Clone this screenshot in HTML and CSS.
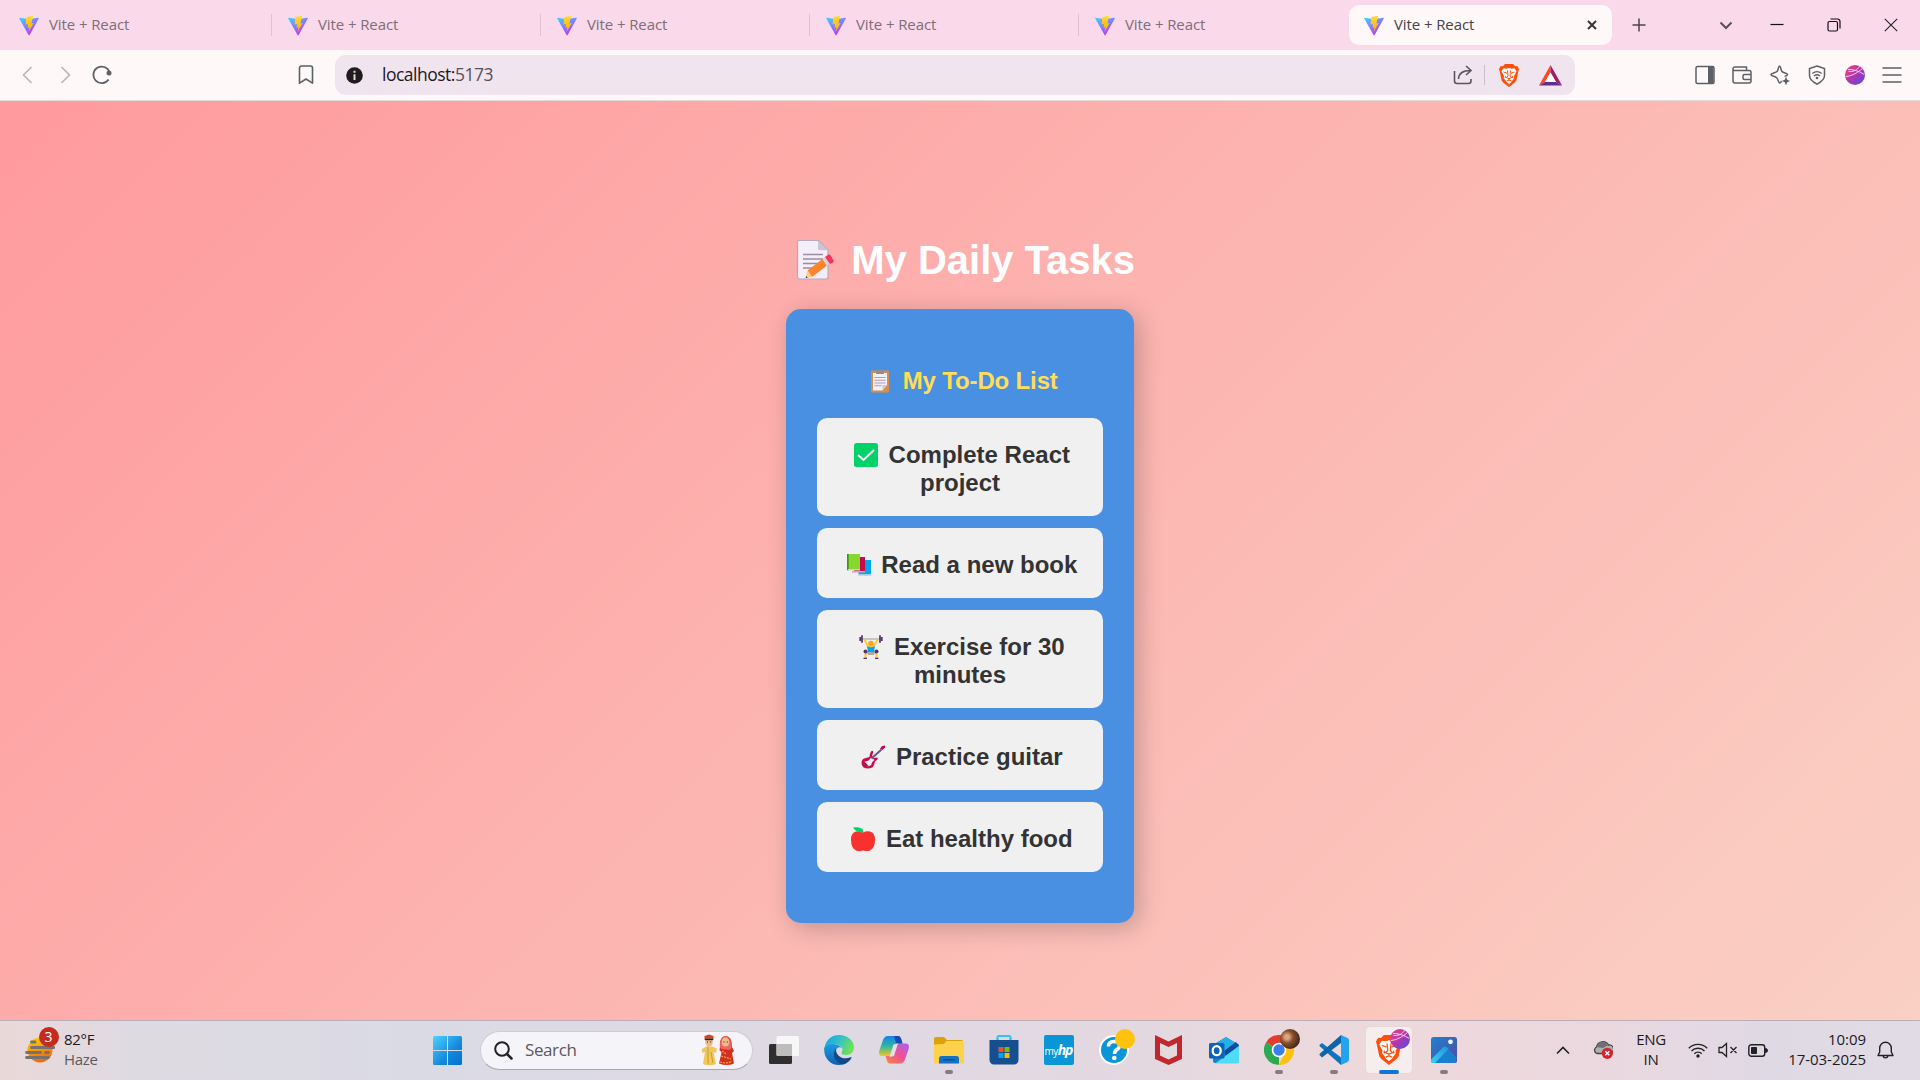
FILE: index.html
```html
<!DOCTYPE html>
<html lang="en">
<head>
<meta charset="utf-8">
<title>Vite + React</title>
<link rel="stylesheet" href="styles.css">
</head>
<body>
<svg class="defs" width="0" height="0">
  <defs>
    <linearGradient id="vg" x1="0" y1="0" x2=".6" y2="1"><stop offset="0" stop-color="#41d1ff"/><stop offset="1" stop-color="#bd34fe"/></linearGradient>
    <linearGradient id="vy" x1="0" y1="0" x2="0" y2="1"><stop offset="0" stop-color="#ffdd35"/><stop offset="1" stop-color="#ffa800"/></linearGradient>
    <linearGradient id="av" x1="0" y1="0" x2="1" y2="1"><stop offset="0" stop-color="#f0447c"/><stop offset=".5" stop-color="#b136b0"/><stop offset="1" stop-color="#4a50e0"/></linearGradient>
    <linearGradient id="win" x1="0" y1="0" x2="1" y2="1"><stop offset="0" stop-color="#4fd2ff"/><stop offset=".6" stop-color="#1488dd"/><stop offset="1" stop-color="#0072cf"/></linearGradient>
    <linearGradient id="sun" x1="0" y1="0" x2=".3" y2="1"><stop offset="0" stop-color="#ffd400"/><stop offset="1" stop-color="#f06a10"/></linearGradient>
    <symbol id="vite" viewBox="0 0 32 32">
      <path fill="url(#vg)" d="M31.500 5 17 31.300a1 1 0 0 1-1.700 0L.5 5A1 1 0 0 1 1.500 3.600l14.300 2.500 14.500-2.500A1 1 0 0 1 31.500 5z"/>
      <path fill="url(#vy)" d="M22.500 .3 12 2.300a.5.5 0 0 0-.4.400L10.500 14.500l4-.8-.9 6 3-.8-1.300 7.600 8.200-14.500-3.700.8z"/>
    </symbol>
    <symbol id="brave" viewBox="0 0 20 23">
      <path fill="#fb4f0c" d="M6 0h8l2.200 2.300 2-.2L20 5l-.6 2L17.500 16c-.7 2.300-4.500 4.700-7.500 7-3-2.300-6.800-4.700-7.500-7L.600 7 0 5l1.800-2.900 2 .2z"/>
      <path fill="#fff" d="m4.500 4.300 3 .5 2.500-.8 2.500.8 3-.5 2 3-2.500 4.700.3 2-2 2.500-.8 1.500L10 20l-2.500-2-.8-1.500-2-2.500.3-2L2.500 7.300z"/>
      <path fill="none" stroke="#fb4f0c" stroke-width="1" d="m4.500 8 3.500 1.200M15.500 8 12 9.200M8.500 6.500 9 12l-1.800 1.500 2.800 1.200 2.800-1.200L11 12l.5-5.500M10 14.700v1.800M6.500 12l-.3 2M13.500 12l.3 2M7.500 17l2.500-1 2.500 1"/>
    </symbol>
    <symbol id="ball" viewBox="0 0 20 20">
      <circle cx="10" cy="10" r="10" fill="url(#av)"/>
      <path d="M.8 11.500C7 11 13 7.500 17.500 3.400M3 4.500c5-.2 11 1.500 16.300 5M3.500 6.500c4 .5 9-1 11-5.300" fill="none" stroke="#ffd9ee" stroke-width=".9"/>
    </symbol>
  </defs>
</svg>

<header class="tabs">
  <div class="tab"><svg class="fav"><use href="#vite"/></svg><span>Vite + React</span></div>
  <div class="tab"><svg class="fav"><use href="#vite"/></svg><span>Vite + React</span></div>
  <div class="tab"><svg class="fav"><use href="#vite"/></svg><span>Vite + React</span></div>
  <div class="tab"><svg class="fav"><use href="#vite"/></svg><span>Vite + React</span></div>
  <div class="tab last"><svg class="fav"><use href="#vite"/></svg><span>Vite + React</span></div>
  <div class="tab active"><svg class="fav"><use href="#vite"/></svg><span>Vite + React</span>
    <svg class="close" width="10" height="10" viewBox="0 0 10 10"><path d="m1 1 8 8M9 1 1 9" stroke="#333" stroke-width="1.900"/></svg></div>
  <svg class="plus" width="14" height="14" viewBox="0 0 14 14"><path d="M7 .5v13M.5 7h13" stroke="#4d444b" stroke-width="1.500"/></svg>
  <div class="window">
    <svg width="14" height="14" viewBox="0 0 14 14"><path d="m1.500 4.500 5.500 5.500 5.500-5.500" fill="none" stroke="#5a5158" stroke-width="2"/></svg>
    <svg width="14" height="14" viewBox="0 0 14 14"><path d="M.5 6.500h13" stroke="#111" stroke-width="1.200"/></svg>
    <svg width="14" height="14" viewBox="0 0 14 14"><rect x="1" y="3.500" width="9.500" height="9.500" rx="1.500" fill="none" stroke="#111" stroke-width="1.200"/><path d="M3.500 1h7a2.500 2.500 0 0 1 2.500 2.500v7" fill="none" stroke="#111" stroke-width="1.200"/></svg>
    <svg width="14" height="14" viewBox="0 0 14 14"><path d="m.8.8 12.400 12.400M13.200.8.8 13.200" stroke="#222" stroke-width="1.100"/></svg>
  </div>
</header>

<nav class="toolbar">
  <div class="nav">
    <svg width="11" height="18" viewBox="0 0 11 18"><path d="M9.500 1 1.500 9l8 8" fill="none" stroke="#b9b5b8" stroke-width="1.600"/></svg>
    <svg width="11" height="18" viewBox="0 0 11 18"><path d="m1.500 1 8 8-8 8" fill="none" stroke="#b9b5b8" stroke-width="1.600"/></svg>
    <svg width="20" height="20" viewBox="0 0 20 20"><path d="M16.600 14.500A8.300 8.300 0 1 1 17.500 7" fill="none" stroke="#5d6065" stroke-width="1.800"/><circle cx="17" cy="8" r="2.500" fill="#5d6065"/></svg>
  </div>
  <svg class="mark" width="16" height="20" viewBox="0 0 16 20"><path d="M1.500 3a2 2 0 0 1 2-2h9a2 2 0 0 1 2 2v15.200L8 14l-6.500 4.200z" fill="none" stroke="#5d6065" stroke-width="1.600" stroke-linejoin="round"/></svg>
  <div class="url">
    <svg width="17" height="17" viewBox="0 0 17 17"><circle cx="8.500" cy="8.500" r="8.300" fill="#211a1f"/><path d="M8.500 3.800v2M8.500 7.200v5.800" stroke="#ddd" stroke-width="2"/></svg>
    <span class="addr">localhost:<i>5173</i></span>
    <svg class="share" width="20" height="20" viewBox="0 0 20 20"><path d="M1.500 6v10a2.500 2.500 0 0 0 2.500 2.500h11.500a2.500 2.500 0 0 0 2.500-2.500v-2M5.500 14c.3-6 5-8.500 12-8.500M13 1l5 4.500-5 4.500" fill="none" stroke="#5b5560" stroke-width="1.600"/></svg>
    <span class="rule"></span>
    <svg class="lion" width="20" height="23"><use href="#brave"/></svg>
    <svg width="23" height="21" viewBox="0 0 23 21"><path d="M11.500 0 0 20.500l6-3.500 5.500-9.500z" fill="#ff4724"/><path d="M11.500 0 23 20.500 17 17l-5.500-9.500z" fill="#9e1f63"/><path d="M0 20.500h23L17 17H6z" fill="#662d91"/><path d="M11.500 7.500 17 17H6z" fill="#fff"/></svg>
  </div>
  <div class="ext">
    <svg viewBox="0 0 20 20"><rect x="1" y="1.500" width="18" height="17" rx="1.500" fill="none" stroke="#5d6065" stroke-width="1.500"/><path d="M13 1h5.500v18H13z" fill="#5d6065"/></svg>
    <svg viewBox="0 0 20 20"><path d="M1 4a2 2 0 0 1 2-2h11.500v3.500M1 4v12a2 2 0 0 0 2 2h14a2 2 0 0 0 2-2V7.500a2 2 0 0 0-2-2H2.500A1.500 1.500 0 0 1 1 4M19 9.500h-6.500a1.500 1.500 0 0 0-1.500 1.500v2a1.500 1.500 0 0 0 1.500 1.500H19" fill="none" stroke="#5d6065" stroke-width="1.500"/></svg>
    <svg viewBox="0 0 20 20"><path d="M12 16.500c-1-.3-1.500 1.500-2.500 1.500S8 13.500 6.500 12.500 1 11 1 9.500 5.500 8 7 6.500 8.300 1 9.500 1s1.300 4 2.500 5.500 5.500 1.700 5.500 3-2 1.200-3 2" fill="none" stroke="#5d6065" stroke-width="1.500"/><path d="m16 11.500 1.200 3.300 3 1.200-3 1.200L16 20.500l-1.200-3.300-3-1.200 3-1.200z" fill="#5d6065"/></svg>
    <svg viewBox="0 0 20 20"><path d="m10 1 7.500 2.500v7c0 4-3.500 6.500-7.500 8.700-4-2.200-7.500-4.700-7.500-8.700v-7z" fill="none" stroke="#5d6065" stroke-width="1.500"/><path d="M5.300 8.500c3-2.400 6.400-2.400 9.400 0M7 11c2-1.600 4-1.600 6 0" fill="none" stroke="#5d6065" stroke-width="1.400"/><circle cx="10" cy="13" r="1.300" fill="#5d6065"/></svg>
    <svg><use href="#ball"/></svg>
    <svg viewBox="0 0 20 20"><path d="M.5 3h19M.5 10h19M.5 17h19" stroke="#5d6065" stroke-width="1.500"/></svg>
  </div>
</nav>

<main class="page">
  <h1><span class="emoji"><svg width="42" height="42" viewBox="0 0 42 42"><path d="M6.500 1.500h19l9.500 9.500v27a2 2 0 0 1-2 2H6.500a2 2 0 0 1-2-2V3.500a2 2 0 0 1 2-2z" fill="#f3eef8" stroke="#b7a9bd" stroke-width="1.200"/><path d="M25 1.500v8a1.700 1.700 0 0 0 1.700 1.700H35z" fill="#cdc4d6"/><path d="M10 15.500h20M10 20h20M10 24.500h18M10 29h11" stroke="#998ea4" stroke-width="1.400"/><path d="m14.500 31.500 15-11.500 4.500 6.500-15 11.500z" fill="#ff822d"/><path d="m14.500 31.500 4.500 6.500-6.300 1z" fill="#ffce7c"/><path d="m12.700 39 .5-2 1.500 1.700z" fill="#402a32"/><path d="m29.500 20 2.500-2 5 6.500-3 2z" fill="#d3d3d3"/><path d="m32 18 3-2.200q1.300-.8 2.300.5l3.200 4.600q.7 1.300-.5 2.300l-3 1.900z" fill="#f8315f"/></svg></span> My Daily Tasks</h1>
  <section class="card">
    <h2><span class="emoji"><svg width="24" height="24" viewBox="0 0 24 24"><rect x="3" y="1.500" width="18" height="22" rx="1" fill="#d58f48"/><path d="M5 4h14v12l-4.500 5.500H5z" fill="#f3eef8"/><path d="M19 16h-4.500v5.500z" fill="#cdc4d6"/><path d="M8 2h2a2 2 0 0 1 4 0h2v3H8z" fill="#998c88"/><path d="M6.500 8.500h11M6.500 11.300h11M6.500 14h11M6.500 16.700h7" stroke="#a9a2b0" stroke-width="1"/></svg></span> My To-Do List</h2>
    <ul>
      <li><span class="emoji"><svg width="24" height="24" viewBox="0 0 24 24"><rect width="24" height="24" rx="2.500" fill="#00d26a"/><path d="m4 12 5.500 5L20 7" fill="none" stroke="#fff" stroke-width="2"/></svg></span> Complete React project</li>
      <li><span class="emoji"><svg width="24" height="24" viewBox="0 0 24 24"><path d="M11.500 7H24v14.500H11.500z" fill="#00a6ed"/><path d="M11.500 21.500H24V23H11.500z" fill="#b9d8ea"/><path d="M7 4h11v14H7z" fill="#ca0b4a"/><path d="M5 18h13v1.500H5z" fill="#d9a0b5"/><path d="M0 1h13v15H0z" fill="#86d72f"/><path d="M0 1h1.700v17L0 17z" fill="#44911b"/><path d="M1 16h12v1.500H1z" fill="#d3d3d3"/></svg></span> Read a new book</li>
      <li><span class="emoji"><svg width="24" height="24" viewBox="0 0 24 24"><path d="M2 4h20" stroke="#9b9b9b" stroke-width="1"/><path d="M1.200 2v4M3 .3v7.400M21 .3v7.400M22.800 2v4" stroke="#533566" stroke-width="1.700"/><path d="m5.500 4.500 3 6 3.500 1 3.500-1 3-6M8 17.500l-1.500 2V23M16 17.500l1.500 2V23" fill="none" stroke="#ffc83d" stroke-width="2"/><circle cx="12" cy="8.500" r="2.800" fill="#f5a819"/><path d="M8 11q4 2.500 8 0l-1 6H9z" fill="#00a6ed"/><path d="M8 17h8l-1 3H9z" fill="#aaa"/><circle cx="6.500" cy="16.500" r="2" fill="#533566"/><circle cx="17.500" cy="16.500" r="2" fill="#533566"/><path d="M4.500 23.400H8M16 23.400h3.500" stroke="#533566" stroke-width="1.300"/></svg></span> Exercise for 30 minutes</li>
      <li><span class="emoji"><svg width="24" height="24" viewBox="0 0 24 24"><path d="M8.500 12Q8.500 9 10 6.500q1.500-1.500 2.200 0 0 1.500-1 3.500-.2 2.500 2 3l3-.5q1.500 1-.7 2.800-2 1-2 3-.5 5-6 5.200Q.5 23.500.500 18q0-4.500 4.500-5z" fill="#ca0b4a"/><path d="M3.500 16.500q4.500 0 6.500-4l3.500 2.500q-3 2-3.200 5l-3.300 1.500z" fill="#f3eef8"/><path d="m10.500 13.500 10-9" stroke="#635994" stroke-width="2"/><path d="m19 3.800 2-2.800L24 .5v2L21.500 5z" fill="#ca0b4a"/><path d="m4 18 3.500 3" stroke="#402a32" stroke-width="1"/></svg></span> Practice guitar</li>
      <li><span class="emoji"><svg width="24" height="24" viewBox="0 0 24 24"><path d="M12 5.500q3.500-2 7-1 5 1.500 5 8 0 9-5.500 11.300-3 .7-6.500-.3-3.500 1-6.500.3Q0 21.500 0 12.500q0-6.500 5-8 3.500-1 7 1z" fill="#f8312f"/><path d="M12.500 5.500Q6.500 5 4 3l-2-2.500Q10-.5 12 3z" fill="#00d26a"/></svg></span> Eat healthy food</li>
    </ul>
  </section>
</main>

<footer class="taskbar">
  <div class="weather">
    <div class="haze">
      <svg width="30" height="28" viewBox="0 0 30 28"><circle cx="15" cy="14" r="12.500" fill="url(#sun)"/><path d="M6.500 6H10M6.500 11.500H29M1.500 16.500h14M20.500 16.500h3M1.500 21.500h22" stroke="#77716d" stroke-width="2.800" stroke-linecap="round"/></svg>
      <b>3</b>
    </div>
    <p>82°F<br><em>Haze</em></p>
  </div>
  <div class="app start"><svg width="29" height="29" viewBox="0 0 29 29"><path d="M1.500 0H14v14H0V1.500A1.500 1.500 0 0 1 1.500 0zM15 0h12.500A1.500 1.500 0 0 1 29 1.500V14H15zM0 15h14v14H1.500A1.500 1.500 0 0 1 0 27.500zM15 15h14v12.500a1.500 1.500 0 0 1-1.500 1.500H15z" fill="url(#win)"/></svg></div>
  <div class="search">
    <svg width="19" height="19" viewBox="0 0 19 19"><circle cx="8" cy="8" r="6.800" fill="none" stroke="#222" stroke-width="2"/><path d="m13 13 4.500 4.500" stroke="#222" stroke-width="2.500" stroke-linecap="round"/></svg>
    <span>Search</span>
    <svg class="couple" width="34" height="32" viewBox="0 0 34 32"><path d="M5 12.500h6l5 2-1 4.500-2.500-1 2.500 12q-7 2.500-13 0L4 18l-2.500 1-1-3.500z" fill="#efc75a"/><path d="M7 12.500v17M10 18l2 11" stroke="#cf9c31" stroke-width="1"/><ellipse cx="8" cy="8" rx="3.800" ry="4.500" fill="#f2b98c"/><path d="M3.500 6V2L8 .5 12.500 2v4L11 4H5z" fill="#d8421c"/><path d="M4 5.300h8" stroke="#352018" stroke-width="1.800"/><path d="M19 13Q18 3 24.500 2q6.500 0 6.500 11l2 4-2 2 2 10.500q-7 3-15 0l2.500-11-2-2.500z" fill="#d32e22"/><path d="M19 13q-.5-10 5.500-11 6 1 6 12l-2 2-8-1z" fill="#ee665f"/><ellipse cx="24.500" cy="8" rx="3.700" ry="4.500" fill="#f2b98c"/><path d="M19 28q6 2 12-.5M20 22l10 3M21 17l4 3" stroke="#f0a23a" stroke-width="1.300" stroke-dasharray="2 1" fill="none"/><path d="M6 8h1M9.200 8h1M22.500 8h1M25.800 8h1" stroke="#222" stroke-width="1.200"/></svg>
  </div>
  <div class="app"><svg width="30" height="30" viewBox="0 0 30 30"><rect x="0" y="9" width="23" height="20" rx="1.500" fill="#2f2f2f"/><rect x="7.500" y="1" width="22.500" height="20" rx="1.500" fill="#fafafa" opacity=".9"/><path d="M7.500 9H23v12H9a1.500 1.500 0 0 1-1.500-1.500z" fill="#bdbdbd"/></svg></div>
  <div class="app"><svg width="30" height="30" viewBox="0 0 30 30"><defs><linearGradient id="e1" x1="0" y1="0" x2="1" y2=".4"><stop offset="0" stop-color="#1b9de2"/><stop offset=".5" stop-color="#2fc0cb"/><stop offset="1" stop-color="#6be15a"/></linearGradient><linearGradient id="e2" x1="0" y1="0" x2="0" y2="1"><stop offset="0" stop-color="#1b9de2"/><stop offset="1" stop-color="#0f5fb5"/></linearGradient></defs><path d="M.5 13C2 4 8 0 15 0c9 0 15 6 15 12.500 0 5-4 7.500-8 7.500-3 0-4.500-1-4.500-2s1-1.500 1-3.500C18.500 9 9 6.500.5 13z" fill="url(#e1)"/><path d="M.2 13C4 7.500 15 8 18 13c-3-2-6.500.5-6.500 4.500 0 5 5 10 13.500 8C22 29 18 30 15 30 6 30-.5 22.500.200 13z" fill="url(#e2)"/><path d="M12 13.500c-5 7 0 15 7 16 3-.8 6.500-3 8.500-6.500.3-.8-.3-1-1-.7-7 3-15-.8-14.500-8.800z" fill="#114a8b"/></svg></div>
  <div class="app"><svg width="30" height="28" viewBox="0 0 30 28"><defs><linearGradient id="c1" x1="0" y1="0" x2="0" y2="1"><stop offset="0" stop-color="#1b80e5"/><stop offset=".5" stop-color="#2bb6a5"/><stop offset="1" stop-color="#f2c81f"/></linearGradient><linearGradient id="c2" x1="1" y1="0" x2="0" y2="1"><stop offset="0" stop-color="#a763f3"/><stop offset=".5" stop-color="#ee5096"/><stop offset="1" stop-color="#ff8a3c"/></linearGradient></defs><path d="M9 0h10q2.500 0 3.500 4l1 3.500h-4q-3 0-4 3.500l-2 6q-1 3-4 3H3Q-1 20 .500 14L4 4q1.500-4 5-4z" fill="url(#c1)"/><path d="M21 27.500H11q-2.500 0-3.500-4l-1-3.500h4q3 0 4-3.500l2-6q1-3 4-3H27q4 0 2.500 6L26 23.500q-1.500 4-5 4z" fill="url(#c2)"/><path d="M15 0h4q2.500 0 3.500 4l1 3.500h-4q-3 0-3-2.500z" fill="#174ab5"/><path d="m14.500 8.500 4.500-1-4 12.500-4.500 1z" fill="#e4dce8"/></svg></div>
  <div class="app running"><svg width="30" height="28" viewBox="0 0 30 28"><path d="M0 2.500A1.500 1.500 0 0 1 1.500 1H10l3 3h15.500v6H0z" fill="#dfa109"/><path d="m0 8.500 10-.5 2.500-3H28.500A1.500 1.500 0 0 1 30 6.500v20a1 1 0 0 1-1 1H1a1 1 0 0 1-1-1z" fill="#fdd14a"/><path d="M5 27.500v-5A2.500 2.500 0 0 1 7.500 20h15a2.500 2.500 0 0 1 2.500 2.500v5z" fill="#1272c4"/><path d="M9 23.800h12" stroke="#0b4c93" stroke-width="1.400"/></svg></div>
  <div class="app"><svg width="30" height="30" viewBox="0 0 30 30"><path d="M8.500 7V2.500A1.500 1.500 0 0 1 10 1h10a1.500 1.500 0 0 1 1.500 1.500V7" fill="none" stroke="#36c2f3" stroke-width="2"/><path d="M.5 5h29v20a4.500 4.500 0 0 1-4.500 4.500H5A4.500 4.500 0 0 1 .5 25z" fill="#164f8f"/><path d="M8.500 5V3M21.500 5V3" stroke="#36c2f3" stroke-width="2"/><path d="M9.500 12h5v5h-5z" fill="#f25022"/><path d="M15.500 12h5v5h-5z" fill="#7fba00"/><path d="M9.500 18h5v5h-5z" fill="#00a4ef"/><path d="M15.500 18h5v5h-5z" fill="#ffb900"/></svg></div>
  <div class="app"><div class="hp"><small>my</small>hp</div></div>
  <div class="app"><div class="badged"><svg width="30" height="30" viewBox="0 0 30 30"><circle cx="15" cy="15" r="14" fill="#0a96d6" stroke="#fff" stroke-width="2"/><path d="M9.500 11.500Q9.500 6.500 15 6.500t5.500 4.300q0 2.200-2.800 4-2.200 1.500-2.200 4.200" fill="none" stroke="#fff" stroke-width="3.500"/><circle cx="15.300" cy="23" r="2.300" fill="#fff"/></svg><i class="dot"></i></div></div>
  <div class="app"><svg width="27" height="30" viewBox="0 0 27 30"><path d="m0 0 13.500 6.500L27 0v24L13.500 30 0 24zM5 8v12.500l8.500 4 8.500-4V8l-8.500 4z" fill="#c1282d" fill-rule="evenodd"/></svg></div>
  <div class="app"><svg width="30" height="28" viewBox="0 0 30 28"><path d="M4 9 17 1l13 8v16a2 2 0 0 1-2 2H6a2 2 0 0 1-2-2z" fill="#1382d0"/><path d="m17 1 13 8-13 10L9 6z" fill="#28aeea"/><path d="m15 15 12-9 3 3.500L17 20z" fill="#0b4a9d"/><path d="M30 10v15.500a2 2 0 0 1-2 2H6z" fill="#4fdcf7"/><rect y="7" width="15.500" height="15.500" rx="1.500" fill="#0e64b4"/><ellipse cx="7.700" cy="14.700" rx="4" ry="4.500" fill="none" stroke="#fff" stroke-width="2.300"/></svg></div>
  <div class="app running"><div class="badged"><svg width="30" height="30" viewBox="0 0 30 30"><path d="M15 15 2 7.500A15 15 0 0 1 28 7.500z" fill="#e33b2e"/><path d="M15 15v15A15 15 0 0 1 2 7.500z" fill="#2da94f"/><path d="M15 15 28 7.500A15 15 0 0 1 14.500 30L21 18z" fill="#fdc10a"/><circle cx="15" cy="15" r="7.300" fill="#fff"/><circle cx="15" cy="15" r="5.700" fill="#3b7ded"/></svg><i class="photo"></i></div></div>
  <div class="app running"><svg width="30" height="30" viewBox="0 0 30 30"><path d="M.5 10 3 8l19 14.500V30L1 11.500q-.8-.8-.5-1.500z" fill="#1074bd"/><path d="M.5 20 3 22.500 22 8V0L1 18.500q-.8.800-.5 1.500z" fill="#0a65a9"/><path d="m22 0 6.500 3A2.500 2.500 0 0 1 30 5.200v19.600a2.500 2.500 0 0 1-1.500 2.200L22 30z" fill="#24a3ee"/></svg></div>
  <div class="app running current"><div class="badged"><svg width="26" height="30"><use href="#brave"/></svg><svg class="mini" width="20" height="20"><use href="#ball"/></svg></div></div>
  <div class="app running"><svg width="26" height="26" viewBox="0 0 26 26"><defs><linearGradient id="ph" x1="0" y1="0" x2="1" y2="1"><stop offset="0" stop-color="#1a83d5"/><stop offset="1" stop-color="#58479a"/></linearGradient><linearGradient id="pm" x1="0" y1="1" x2="1" y2="0"><stop offset="0" stop-color="#3bd0f5"/><stop offset="1" stop-color="#2196dd"/></linearGradient></defs><rect width="26" height="26" rx="2.500" fill="url(#ph)"/><path d="M1 24 12 10.500q2-1.800 4 0l9.500 10V24a2 2 0 0 1-2 2H2.500z" fill="#1b7fd0"/><path d="M0 22.500 12 10.500q2-1.800 4 0l1.500 1.500L4 26H2a2 2 0 0 1-2-2z" fill="url(#pm)"/><circle cx="19.500" cy="4.800" r="2.400" fill="#eef6ff"/></svg></div>
  <div class="tray">
    <svg class="up" width="14" height="9" viewBox="0 0 14 9"><path d="m1 7.500 6-6 6 6" fill="none" stroke="#222" stroke-width="1.600"/></svg>
    <svg class="cloud" width="20" height="18" viewBox="0 0 20 18"><path d="M4 12.500A3.500 3.500 0 0 1 3.500 6 6.500 6.500 0 0 1 15.500 4a4 4 0 0 1 1.500 8.500z" fill="#aeb0b3" stroke="#444" stroke-width="1.300"/><path d="M3.500 6A6.500 6.500 0 0 1 15.500 4L10 7z" fill="#6e7174"/><circle cx="14.300" cy="12.300" r="5.600" fill="#d9222f"/><path d="m12.300 10.300 4 4m0-4-4 4" stroke="#fff" stroke-width="1.400"/></svg>
    <p class="lang">ENG<br>IN</p>
    <svg class="wifi" width="20" height="16" viewBox="0 0 20 16"><path d="M.8 6.200a13 13 0 0 1 18.400 0M3.500 9a9.200 9.200 0 0 1 13 0M6.300 11.700a5.200 5.200 0 0 1 7.400 0" fill="none" stroke="#222" stroke-width="1.400"/><circle cx="10" cy="14" r="1.700" fill="#222"/></svg>
    <svg class="vol" width="20" height="16" viewBox="0 0 20 16"><path d="M1 5.500h3L8.500 1.500v13L4 10.500H1zM12.500 5l6 6m0-6-6 6" fill="none" stroke="#222" stroke-width="1.300"/></svg>
    <svg class="bat" width="20" height="13" viewBox="0 0 20 13"><rect x=".8" y=".8" width="15.900" height="11.400" rx="2.500" fill="none" stroke="#222" stroke-width="1.400"/><rect x="3" y="3" width="6" height="7" rx=".8" fill="#222"/><path d="M17.500 4.500q2 0 2 2t-2 2z" fill="#222" stroke="#222"/></svg>
    <p class="clock">10:09<br>17-03-2025</p>
    <svg class="bell" width="17" height="19" viewBox="0 0 17 19"><path d="M1 14.500 2.700 11V7a5.800 5.800 0 0 1 11.600 0v4l1.700 3.500zM6 15a2.600 2.600 0 0 0 5 0" fill="none" stroke="#222" stroke-width="1.400" stroke-linejoin="round"/></svg>
  </div>
</footer>
</body>
</html>
```
FILE: styles.css
```css
* { box-sizing: border-box; }
body { margin: 0; width: 1920px; height: 1080px; overflow: hidden; display: flex; flex-direction: column; font-family: "Open Sans", sans-serif; }
svg { display: block; flex: none; }
p, h1, h2, ul { margin: 0; padding: 0; }
.defs { position: absolute; }

/* tab strip */
.tabs { height: 50px; flex: none; display: flex; align-items: center; background: #fad9ea; }
.tab { width: 269px; height: 22px; display: flex; align-items: center; gap: 10px; padding-left: 16px; border-right: 1px solid #dfc1d1; font-size: 15px; letter-spacing: -.1px; color: #7c6f78; white-space: nowrap; }
.tab span { padding-bottom: 2px; }
.tab:first-child { width: 272px; padding-left: 19px; }
.tab.last { width: 270px; border: 0; }
.fav { width: 20px; height: 21px; }
.tab.active { width: 263px; height: 40px; border: 0; padding: 0 15px; border-radius: 10px; background: #fef8f8; color: #484248; }
.close { margin-left: auto; }
.plus { margin-left: 20px; }
.window { margin-left: auto; margin-right: 22px; display: flex; }
.window svg + svg { margin-left: 43px; }
.window svg:nth-child(2) { margin-left: 37px; }

/* address row */
.toolbar { height: 51px; flex: none; display: flex; align-items: center; padding: 0 18px 0 22px; background: #fef8f8; border-bottom: 1px solid #e2dade; }
.nav { display: flex; align-items: center; width: 276px; }
.nav svg:nth-child(2) { margin-left: 27px; }
.nav svg:nth-child(3) { margin-left: 21px; }
.url { width: 1240px; height: 40px; margin-left: 21px; padding: 0 13px 0 11px; display: flex; align-items: center; border-radius: 11px; background: #f0e4ee; }
.addr { margin-left: 19px; padding-bottom: 2px; font-size: 17.500px; letter-spacing: -.5px; color: #1f171d; }
.addr i { font-style: normal; color: #5a5058; }
.share { margin-left: auto; }
.rule { width: 1px; height: 20px; margin: 0 14px 0 11px; background: #c9bfc8; }
.lion { margin-right: 20px; }
.ext { margin-left: auto; display: flex; gap: 17.500px; }
.ext svg { width: 20px; height: 20px; }

/* to-do page */
.page { flex: 1; display: flex; flex-direction: column; align-items: center; background: linear-gradient(135deg, #ff9a9e, #fad0c4); font-family: "Liberation Sans", Arial, sans-serif; font-weight: bold; }
.emoji { display: inline-flex; justify-content: center; width: 1.33em; height: 1em; vertical-align: -4px; }
h1 { margin-top: 135px; height: 73px; padding-left: 2px; font-size: 40px; line-height: 48px; color: #fff; white-space: nowrap; }
h1 .emoji { vertical-align: -7px; }
.card { width: 348px; height: 614px; padding: 57px 31px 0; border-radius: 15px; background: #4a90e2; box-shadow: 5px 5px 25px rgba(0, 0, 0, .22); text-align: center; }
h2 { height: 52px; padding-left: 2px; font-size: 24px; line-height: 30px; letter-spacing: -.15px; color: #ffdd57; }
ul { list-style: none; display: flex; flex-direction: column; gap: 12px; }
li { padding: 23px 20px 19px; border-radius: 10px; background: #f0f0f0; color: #333; font-size: 24px; line-height: 28px; }

/* taskbar */
.taskbar { height: 60px; flex: none; display: flex; align-items: center; padding-bottom: 1px; border-top: 1px solid #b9aeb9; background: linear-gradient(90deg, #ead8d8, #dedae2 7%, #dadae5 22%, #dfd9e3 45%, #e4d8e0 60%, #eed9dc 72%, #ead8df 84%, #dfd9e5 92%, #e0dbe4); font-size: 15px; line-height: 20px; color: #1d1b1e; }
.taskbar p { padding-bottom: 3px; }
.weather { width: 395px; padding-left: 25px; display: flex; align-items: center; gap: 9px; letter-spacing: -.3px; }
.weather em { font-style: normal; color: #5e5a60; }
.haze { position: relative; }
.haze b { position: absolute; left: 13.500px; top: -9px; width: 20px; height: 20px; border-radius: 50%; background: #c42b1c; color: #fff; font-weight: 400; font-size: 14px; line-height: 19px; text-align: center; letter-spacing: 0; }
.app { width: 55px; height: 100%; flex: none; display: flex; align-items: center; justify-content: center; position: relative; }
.app.start { width: 105px; margin-right: -20px; }
.search { width: 273px; height: 39px; flex: none; display: flex; align-items: center; padding: 0 17px 0 13px; margin-right: 3px; border: 1px solid #d0ccd6; border-bottom-color: #a9a6af; border-radius: 20px; background: #f5f4f8; font-size: 17px; color: #5b585e; }
.search span { margin-left: 12px; letter-spacing: -.4px; }
.couple { margin-left: auto; }
.running::after { content: ""; position: absolute; bottom: 5px; width: 8px; height: 4px; border-radius: 2px; background: #857b82; }
.current::before { content: ""; position: absolute; inset: 5px 3px 5px 4px; border-radius: 5px; background: #f6edef; border: 1px solid #e4d8dc; }
.current::after { width: 20px; background: #0a78d4; }
.badged { position: relative; }
.dot, .photo { position: absolute; left: 16px; top: -6px; width: 20px; height: 20px; border-radius: 50%; background: #ffc20e; }
.photo { background: radial-gradient(circle at 35% 40%, #e0a57c 0 12%, #85502f 35%, #3f2619 75%, #6a4a3c); }
.mini { position: absolute; left: 14px; top: -6px; }
.hp { width: 30px; height: 30px; border-radius: 2px; background: #0a96d6; color: #fff; font: italic bold 14px/29px "Open Sans", sans-serif; letter-spacing: -1px; text-align: center; }
.hp small { font: 10px "Open Sans", sans-serif; letter-spacing: -.6px; }
.tray { display: flex; align-items: center; margin-left: auto; padding-right: 26px; letter-spacing: -.3px; }
.cloud { margin-left: 23px; }
.lang { width: 48px; margin-left: 14px; text-align: center; }
.wifi { margin-left: 13px; }
.vol { margin-left: 10px; }
.bat { margin-left: 10px; }
.clock { width: 88px; margin-left: 10px; text-align: right; letter-spacing: -.05px; }
.bell { margin-left: 11px; }
```
